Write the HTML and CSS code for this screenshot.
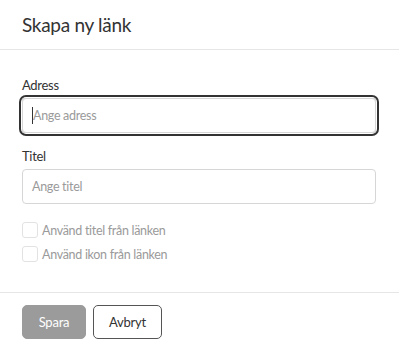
FILE: index.html
```html
<!DOCTYPE html>
<html lang="sv">
<head>
<meta charset="utf-8">
<link rel="stylesheet" href="styles.css">
</head>
<body>
<div class="dialog">
  <header class="head">
    <h1 class="title">Skapa ny länk</h1>
  </header>
  <main class="body">
    <div class="field">
      <label class="label">Adress</label>
      <div class="input focus"><span class="caret"></span><span class="ph">Ange adress</span></div>
    </div>
    <div class="field">
      <label class="label">Titel</label>
      <div class="input"><span class="ph">Ange titel</span></div>
    </div>
    <div class="checks">
      <div class="check"><span class="box"></span><span class="ctext">Använd titel från länken</span></div>
      <div class="check"><span class="box"></span><span class="ctext">Använd ikon från länken</span></div>
    </div>
  </main>
  <footer class="foot">
    <button class="btn primary">Spara</button>
    <button class="btn secondary">Avbryt</button>
  </footer>
</div>
</body>
</html>
```
FILE: styles.css
```css
* { box-sizing: border-box; }
html, body { margin: 0; padding: 0; background: #fff; }
body { font-family: Lato, "Noto Sans", sans-serif; color: #333; width: 399px; height: 348px; overflow: hidden; letter-spacing: -0.3px; }
.head { height: 50px; border-bottom: 1px solid #e6e6e6; padding: 0 22px; display: flex; align-items: center; }
.title { margin: 0; font-size: 19px; font-weight: 400; color: #333; letter-spacing: -0.3px; }
.body { padding: 26px 23px 0 22px; height: 243px; border-bottom: 1px solid #e6e6e6; }
.field { display: flex; flex-direction: column; margin-bottom: 14px; }
.label { font-size: 13px; line-height: 18px; color: #333; margin-bottom: 4px; }
.input { height: 35px; border: 1px solid #d6d6d6; border-radius: 4px; display: flex; align-items: center; padding: 0 9px; font-size: 12.5px; }
.input.focus { box-shadow: 0 0 0 1px #fff, 0 0 0 3px #333; }
.ph { color: #9a9a9a; }
.caret { width: 1px; height: 17px; background: #333; }
.checks { display: flex; flex-direction: column; gap: 8px; margin-top: 18px; }
.check { display: flex; align-items: center; gap: 4px; height: 16px; }
.box { width: 16px; height: 16px; border: 1px solid #e2e2e2; border-radius: 3px; }
.ctext { font-size: 12.5px; color: #9a9a9a; }
.foot { display: flex; gap: 7px; padding: 12px 22px 0; }
.btn { height: 34px; border-radius: 5px; font-family: inherit; font-size: 13px; letter-spacing: -0.2px; padding: 0; }
.primary { width: 64px; background: #9b9b9b; border: 1px solid #9b9b9b; color: #fff; }
.secondary { width: 69px; background: #fff; border: 1px solid #555; color: #333; }
```
